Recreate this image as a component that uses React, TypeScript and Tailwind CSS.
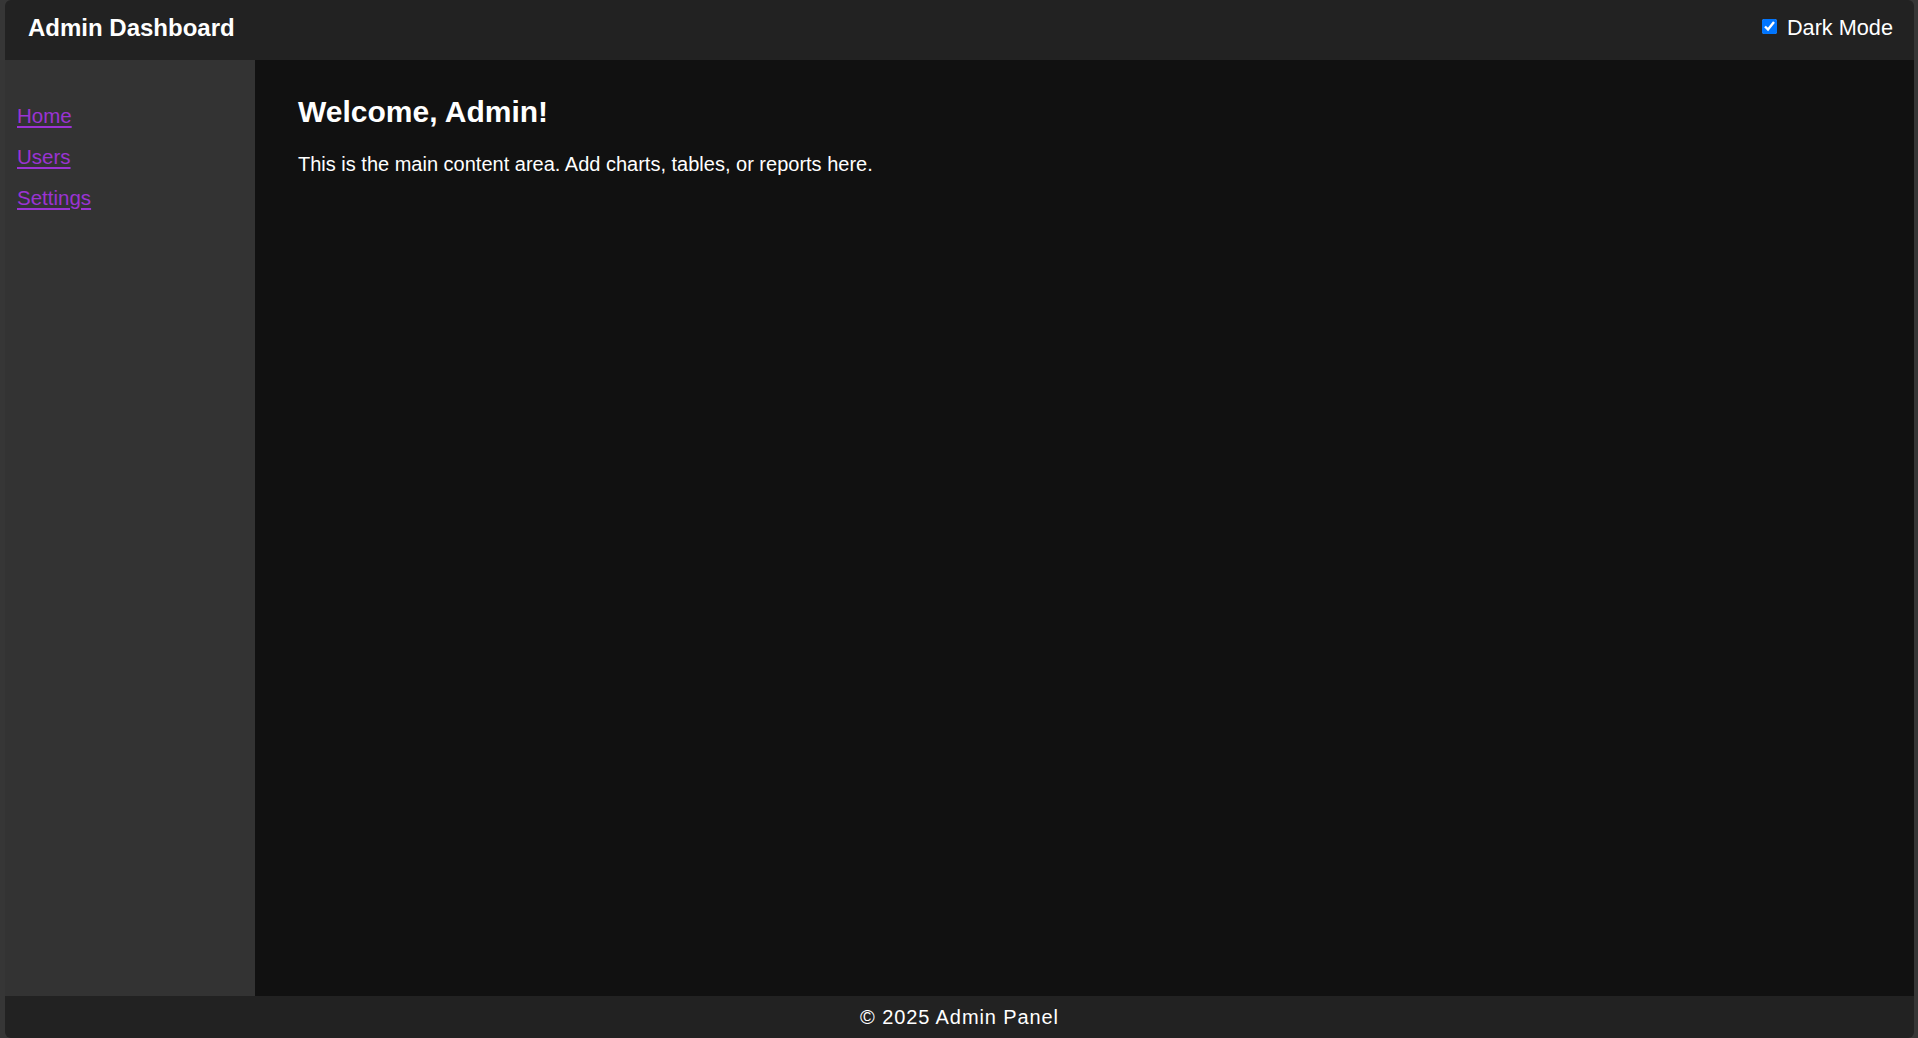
import React from "react";

export default function App() {
    const [darkMode, setDarkMode] = React.useState(true);

    const links = [
        { label: "Home", href: "#home" },
        { label: "Users", href: "#users" },
        { label: "Settings", href: "#settings" }
    ];

    return (
        <div className="h-screen w-full flex bg-[#363636] pl-[5px] pr-[4px] font-['Liberation_Sans',Arial,sans-serif] text-white">
            <div className="flex-1 flex flex-col min-w-0 overflow-hidden rounded-[6px]">
                {/* header */}
                <header className="h-[60px] shrink-0 bg-[#222222] flex items-start justify-between pl-[23px] pr-[21px]">
                    <h1 className="pt-[16px] text-[24px] leading-[24px] font-bold">Admin Dashboard</h1>
                    <label className="pt-[17px] flex items-start gap-[10px] text-[21.7px] leading-[22px] cursor-pointer">
                        <input
                            type="checkbox"
                            checked={darkMode}
                            onChange={e => setDarkMode(e.target.checked)}
                            className="m-0 mt-[2px] w-[15px] h-[15px] accent-[#0075ff]"
                        />
                        <span>Dark Mode</span>
                    </label>
                </header>

                <div className="flex-1 flex min-h-0">
                    {/* sidebar */}
                    <nav className="w-[250px] shrink-0 bg-[#333333] pl-[12px] pt-[46px] flex flex-col gap-[21px]">
                        {links.map(link => (
                            <a
                                key={link.label}
                                href={link.href}
                                className="self-start text-[20.5px] leading-[20px] text-[#9b33d3] underline underline-offset-[3px]"
                            >
                                {link.label}
                            </a>
                        ))}
                    </nav>

                    {/* main content */}
                    <main className="flex-1 bg-[#111111] pl-[43px] pt-[37px]">
                        <h2 className="text-[30px] leading-[30px] font-bold">Welcome, Admin!</h2>
                        <p className="mt-[27px] text-[20px] leading-[20px]">
                            This is the main content area. Add charts, tables, or reports here.
                        </p>
                    </main>
                </div>

                <footer className="h-[42px] shrink-0 bg-[#222222] flex items-center justify-center text-[20px] leading-[20px] tracking-[0.9px]">
                    © 2025 Admin Panel
                </footer>
            </div>
        </div>
    );
}
